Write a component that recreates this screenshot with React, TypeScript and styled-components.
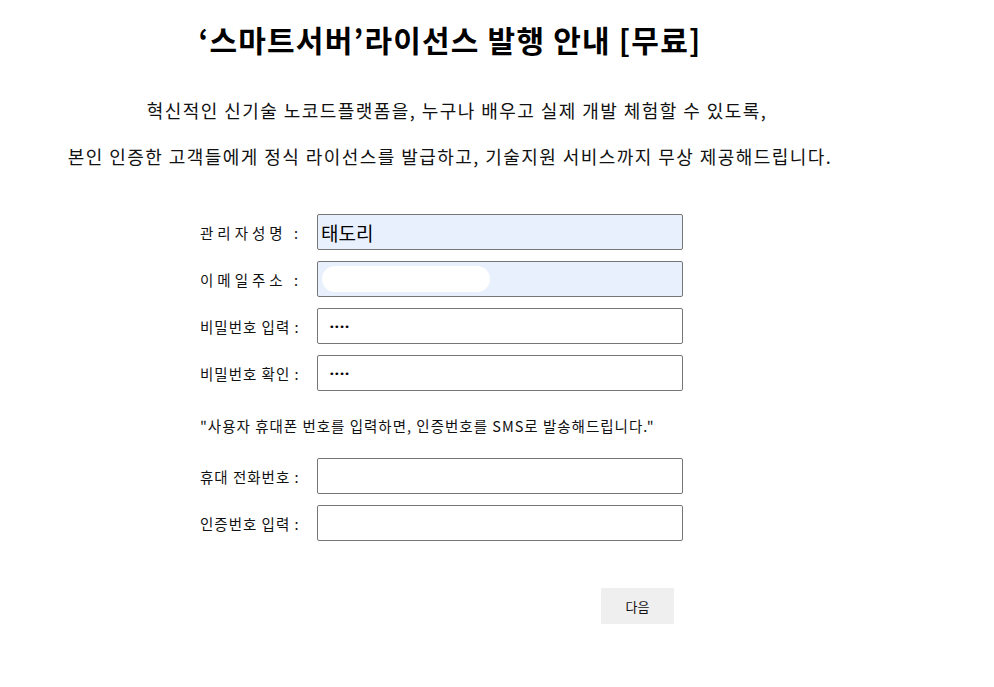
import { FC } from 'react';
import styled, { createGlobalStyle } from 'styled-components';

const GlobalStyle = createGlobalStyle`
  html, body {
    margin: 0;
    padding: 0;
    background: #ffffff;
  }
  body {
    font-family: "Noto Sans CJK KR", "Noto Sans", sans-serif;
    color: #111111;
  }
`;

type FieldType = {
  label: string;
  spaced?: boolean;
  value?: string;
  type?: string;
  filled?: boolean;
  masked?: boolean;
};

const accountFields: FieldType[] = [
  { label: '관리자성명 :', spaced: true, value: '태도리', filled: true },
  { label: '이메일주소 :', spaced: true, filled: true, masked: true },
  { label: '비밀번호 입력 :', value: '1234', type: 'password' },
  { label: '비밀번호 확인 :', value: '1234', type: 'password' },
];

const phoneFields: FieldType[] = [
  { label: '휴대 전화번호 :' },
  { label: '인증번호 입력 :' },
];

const Field: FC<{ field: FieldType }> = ({ field }) => (
  <Row>
    <Label $spaced={field.spaced}>{field.label}</Label>
    <InputBox>
      <Input
        type={field.type ?? 'text'}
        defaultValue={field.value}
        $filled={field.filled}
        $password={field.type === 'password'}
        readOnly
      />
      {field.masked && <Mask />}
    </InputBox>
  </Row>
);

const App: FC = () => {
  return (
    <>
      <GlobalStyle />
      <Page>
        <Title>‘스마트서버’라이선스 발행 안내 [무료]</Title>
        <Intro>
          <IntroLine $indent>혁신적인 신기술 노코드플랫폼을, 누구나 배우고 실제 개발 체험할 수 있도록,</IntroLine>
          <IntroLine>본인 인증한 고객들에게 정식 라이선스를 발급하고, 기술지원 서비스까지 무상 제공해드립니다.</IntroLine>
        </Intro>
        <Form>
          <Group>
            {accountFields.map((field) => (
              <Field field={field} key={field.label} />
            ))}
          </Group>
          <Note>"사용자 휴대폰 번호를 입력하면, 인증번호를 SMS로 발송해드립니다."</Note>
          <Group>
            {phoneFields.map((field) => (
              <Field field={field} key={field.label} />
            ))}
          </Group>
          <Actions>
            <NextButton type="button">다음</NextButton>
          </Actions>
        </Form>
      </Page>
    </>
  );
};

export default App;

const Page = styled.div`
  width: 900px;
  padding-top: 16px;
  display: flex;
  flex-direction: column;
`;

const Title = styled.h1`
  margin: 0;
  text-align: center;
  font-size: 30px;
  font-weight: 700;
  line-height: 46px;
  letter-spacing: 1.2px;
  color: #000000;
`;

const Intro = styled.div`
  margin-top: 36px;
  text-align: center;
  font-size: 18px;
  line-height: 24px;
  letter-spacing: 1.45px;
  color: #111111;
  display: flex;
  flex-direction: column;
  gap: 22px;
`;

const IntroLine = styled.p<{ $indent?: boolean }>`
  margin: 0;
  padding-left: ${({ $indent }) => ($indent ? '14px' : '0')};
`;

const Form = styled.form`
  margin-top: 46px;
  padding-left: 200px;
  display: flex;
  flex-direction: column;
`;

const Group = styled.div`
  display: flex;
  flex-direction: column;
  gap: 11px;
`;

const Row = styled.div`
  display: flex;
  align-items: center;
`;

const Label = styled.label<{ $spaced?: boolean }>`
  width: 117px;
  font-size: 14.5px;
  color: #111111;
  letter-spacing: ${({ $spaced }) => ($spaced ? '4px' : '1px')};
`;

const InputBox = styled.div`
  position: relative;
  width: 366px;
  height: 36px;
`;

const Input = styled.input<{ $filled?: boolean; $password?: boolean }>`
  box-sizing: border-box;
  width: 100%;
  height: 100%;
  margin: 0;
  border: 1px solid #767676;
  border-radius: 2px;
  background: ${({ $filled }) => ($filled ? '#e8f0fe' : '#ffffff')};
  padding: 0 0 0 ${({ $password }) => ($password ? '11px' : '3px')};
  font-family: ${({ $password }) =>
    $password ? '"DejaVu Sans", sans-serif' : '"Noto Sans CJK KR", sans-serif'};
  font-size: ${({ $password }) => ($password ? '9.5px' : '19px')};
  letter-spacing: ${({ $password }) => ($password ? '-0.5px' : '0')};
  color: #000000;
  outline: none;
`;

const Mask = styled.span`
  position: absolute;
  left: 5px;
  top: 5px;
  width: 168px;
  height: 26px;
  border-radius: 13px;
  background: #ffffff;
`;

const Note = styled.p`
  margin: 25px 0 22px;
  font-size: 14.5px;
  line-height: 20px;
  letter-spacing: 1px;
  color: #111111;
`;

const Actions = styled.div`
  width: 474px;
  margin-top: 47px;
  display: flex;
  justify-content: flex-end;
`;

const NextButton = styled.button`
  width: 73px;
  height: 36px;
  border: none;
  background: #efefef;
  font-family: "Noto Sans CJK KR", sans-serif;
  font-size: 13px;
  color: #111111;
  cursor: pointer;
`;
